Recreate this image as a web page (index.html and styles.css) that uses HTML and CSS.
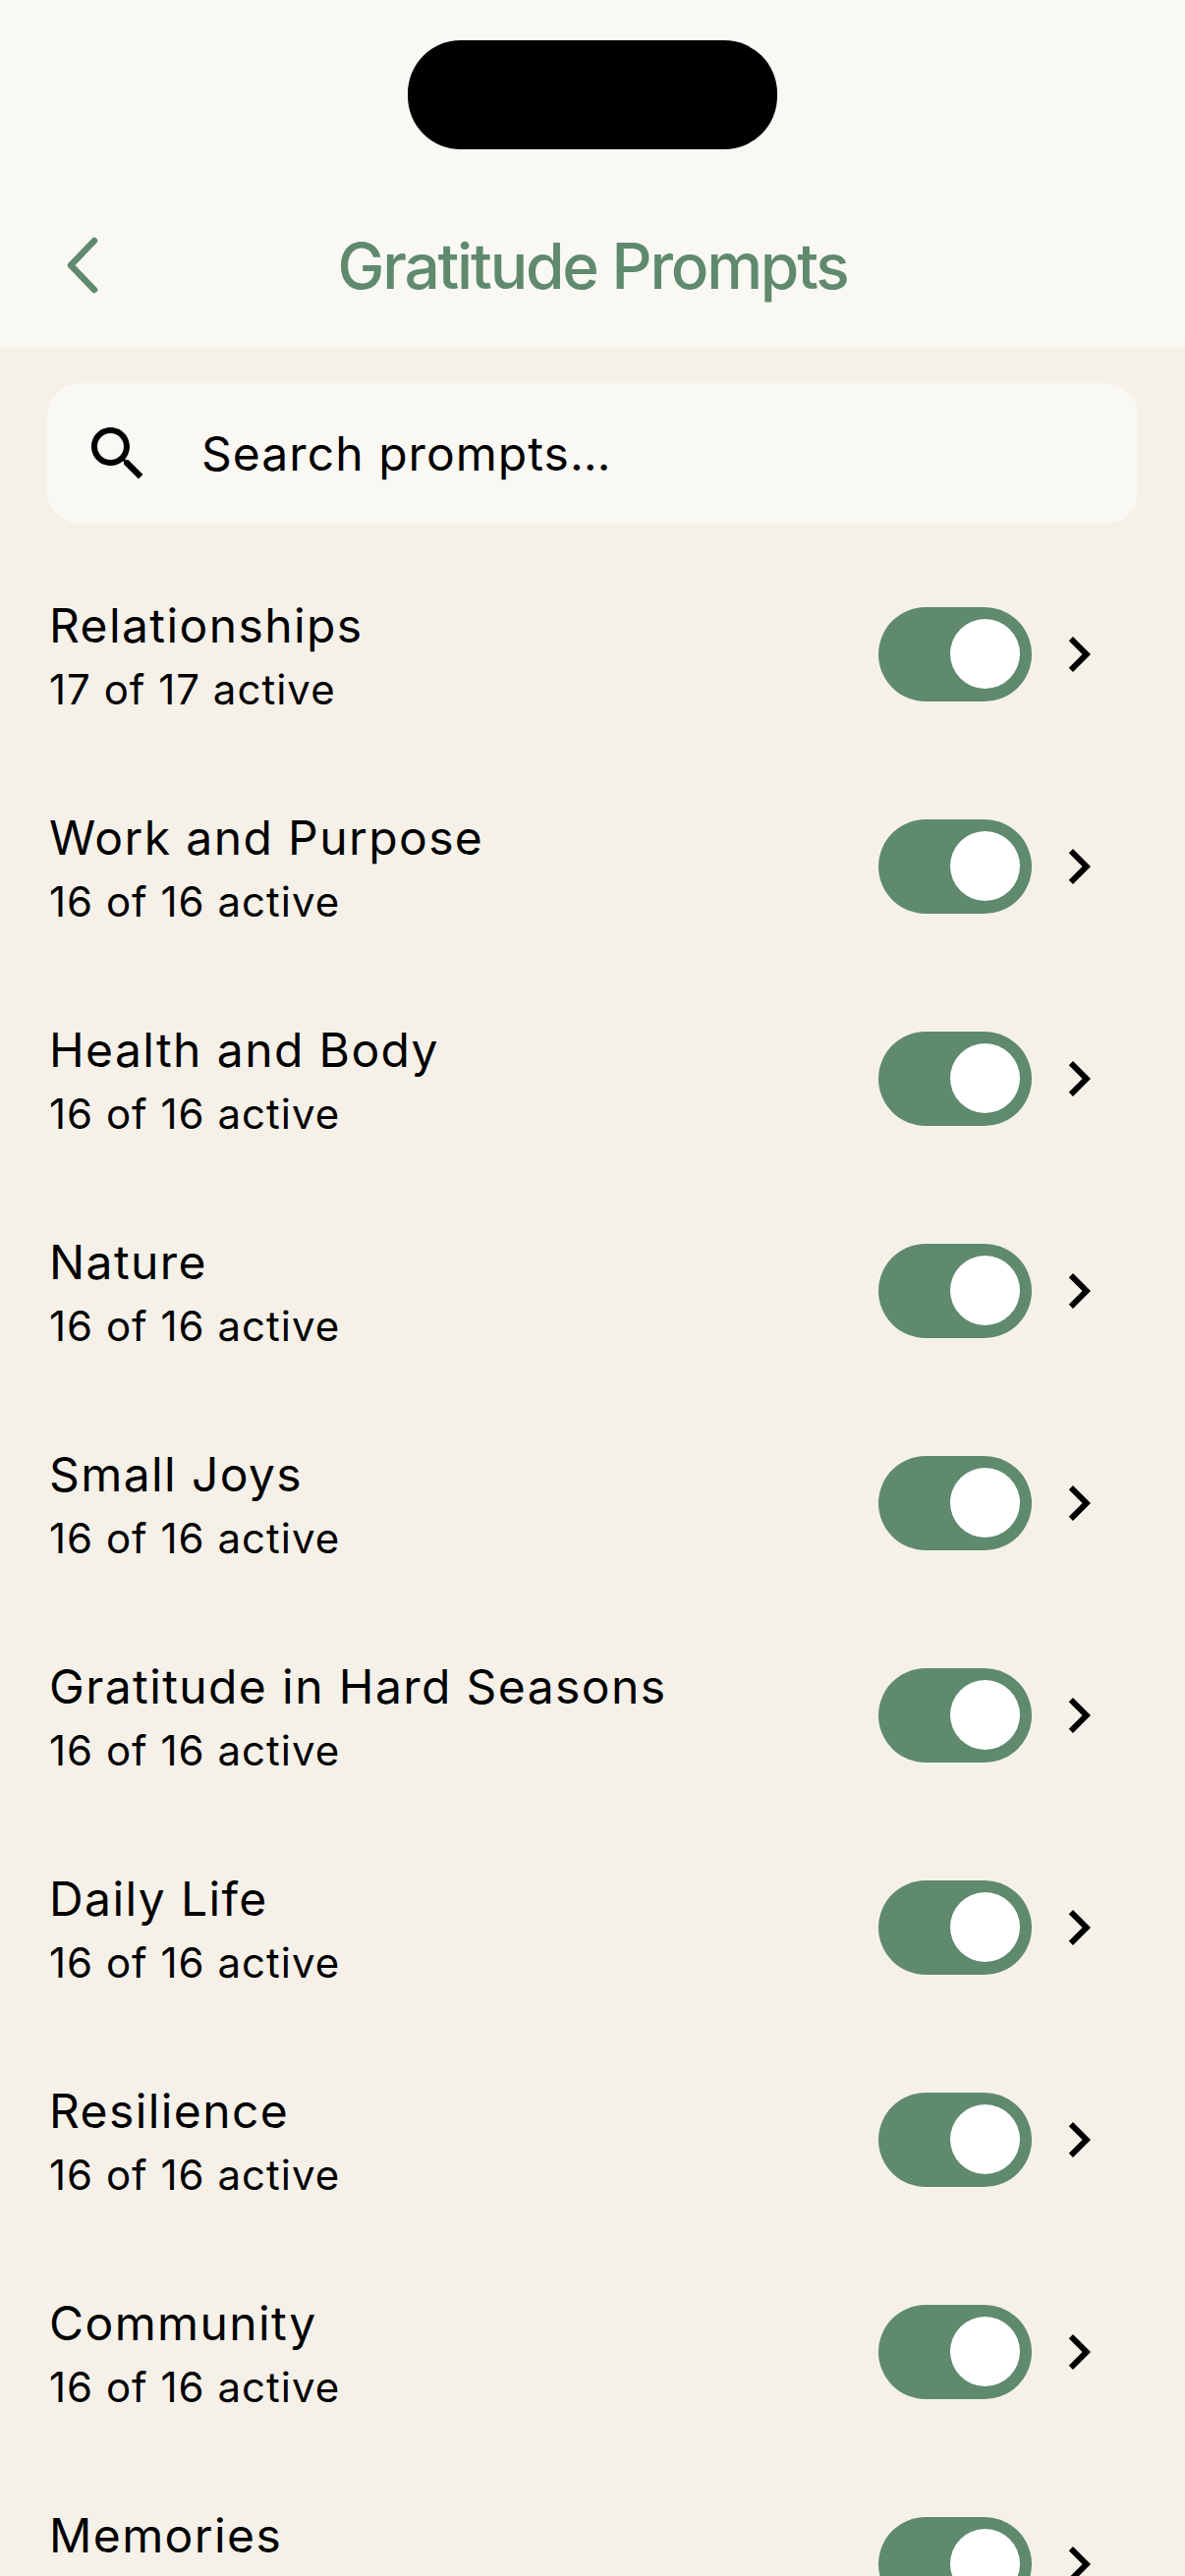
FILE: index.html
```html
<!DOCTYPE html>
<html lang="en">
<head>
<meta charset="utf-8">
<title>Gratitude Prompts</title>
<link rel="stylesheet" href="styles.css">
</head>
<body>
<header class="header">
  <svg class="back" viewBox="0 0 40 64" aria-hidden="true"><path d="M33 7 L9 32 L33 57"/></svg>
  <h1 class="title">Gratitude Prompts</h1>
</header>
<div class="island"></div>
<div class="search">
  <svg class="search-icon" viewBox="0 0 24 24" aria-hidden="true"><path d="M15.5 14h-.79l-.28-.27C15.41 12.59 16 11.11 16 9.5 16 5.91 13.09 3 9.5 3S3 5.91 3 9.5 5.91 16 9.5 16c1.61 0 3.09-.59 4.23-1.57l.27.28v.79l5 4.99L20.49 19l-4.99-5zm-6 0C7.01 14 5 11.99 5 9.5S7.01 5 9.5 5 14 7.01 14 9.5 11.99 14 9.5 14z"/></svg>
  <span class="search-text">Search prompts…</span>
</div>
<main class="list">
  <div class="row"><div class="info"><div class="name">Relationships</div><div class="count">17 of 17 active</div></div><div class="toggle"><div class="thumb"></div></div><svg class="chev" viewBox="0 0 24 24" aria-hidden="true"><path d="M10 6L8.59 7.41 13.17 12l-4.58 4.59L10 18l6-6z"/></svg></div>
  <div class="row"><div class="info"><div class="name">Work and Purpose</div><div class="count">16 of 16 active</div></div><div class="toggle"><div class="thumb"></div></div><svg class="chev" viewBox="0 0 24 24" aria-hidden="true"><path d="M10 6L8.59 7.41 13.17 12l-4.58 4.59L10 18l6-6z"/></svg></div>
  <div class="row"><div class="info"><div class="name">Health and Body</div><div class="count">16 of 16 active</div></div><div class="toggle"><div class="thumb"></div></div><svg class="chev" viewBox="0 0 24 24" aria-hidden="true"><path d="M10 6L8.59 7.41 13.17 12l-4.58 4.59L10 18l6-6z"/></svg></div>
  <div class="row"><div class="info"><div class="name">Nature</div><div class="count">16 of 16 active</div></div><div class="toggle"><div class="thumb"></div></div><svg class="chev" viewBox="0 0 24 24" aria-hidden="true"><path d="M10 6L8.59 7.41 13.17 12l-4.58 4.59L10 18l6-6z"/></svg></div>
  <div class="row"><div class="info"><div class="name">Small Joys</div><div class="count">16 of 16 active</div></div><div class="toggle"><div class="thumb"></div></div><svg class="chev" viewBox="0 0 24 24" aria-hidden="true"><path d="M10 6L8.59 7.41 13.17 12l-4.58 4.59L10 18l6-6z"/></svg></div>
  <div class="row"><div class="info"><div class="name">Gratitude in Hard Seasons</div><div class="count">16 of 16 active</div></div><div class="toggle"><div class="thumb"></div></div><svg class="chev" viewBox="0 0 24 24" aria-hidden="true"><path d="M10 6L8.59 7.41 13.17 12l-4.58 4.59L10 18l6-6z"/></svg></div>
  <div class="row"><div class="info"><div class="name">Daily Life</div><div class="count">16 of 16 active</div></div><div class="toggle"><div class="thumb"></div></div><svg class="chev" viewBox="0 0 24 24" aria-hidden="true"><path d="M10 6L8.59 7.41 13.17 12l-4.58 4.59L10 18l6-6z"/></svg></div>
  <div class="row"><div class="info"><div class="name">Resilience</div><div class="count">16 of 16 active</div></div><div class="toggle"><div class="thumb"></div></div><svg class="chev" viewBox="0 0 24 24" aria-hidden="true"><path d="M10 6L8.59 7.41 13.17 12l-4.58 4.59L10 18l6-6z"/></svg></div>
  <div class="row"><div class="info"><div class="name">Community</div><div class="count">16 of 16 active</div></div><div class="toggle"><div class="thumb"></div></div><svg class="chev" viewBox="0 0 24 24" aria-hidden="true"><path d="M10 6L8.59 7.41 13.17 12l-4.58 4.59L10 18l6-6z"/></svg></div>
  <div class="row"><div class="info"><div class="name">Memories</div><div class="count">16 of 16 active</div></div><div class="toggle"><div class="thumb"></div></div><svg class="chev" viewBox="0 0 24 24" aria-hidden="true"><path d="M10 6L8.59 7.41 13.17 12l-4.58 4.59L10 18l6-6z"/></svg></div>
</main>
</body>
</html>
```
FILE: styles.css
```css
* { box-sizing: border-box; }
html, body { margin: 0; padding: 0; }
body {
  position: relative;
  width: 1206px;
  height: 2622px;
  overflow: hidden;
  background: #f5f1e9;
  font-family: Inter, "Liberation Sans", sans-serif;
  font-weight: 400;
  color: #000;
}
.island {
  position: absolute;
  left: 415px;
  top: 41px;
  width: 376px;
  height: 111px;
  background: #000;
  border-radius: 54px;
}
.header {
  position: relative;
  height: 354px;
  background: #faf8f3;
  display: flex;
  justify-content: center;
  align-items: flex-end;
  padding-bottom: 47px;
}
.back {
  position: absolute;
  left: 63px;
  top: 238px;
  width: 40px;
  height: 64px;
  fill: none;
  stroke: #5f8a6e;
  stroke-width: 6.5;
  stroke-linecap: round;
  stroke-linejoin: round;
}
.title {
  margin: 0;
  font-size: 64px;
  line-height: 72px;
  font-weight: 500;
  letter-spacing: -2.2px;
  color: #5f8a6e;
}
.search {
  display: flex;
  align-items: center;
  gap: 49px;
  height: 143px;
  margin: 36px 48px 25px;
  padding-left: 36px;
  background: #faf8f3;
  border-radius: 33px;
}
.search-icon { width: 72px; height: 72px; fill: #000; flex: none; }
.search-text { font-size: 48px; letter-spacing: 1.05px; }
.list { display: flex; flex-direction: column; }
.row {
  display: flex;
  align-items: center;
  height: 216px;
  padding: 0 72px 0 50px;
  flex: none;
}
.info { flex: 1; min-width: 0; padding-top: 2px; }
.name { font-size: 48px; line-height: 60px; letter-spacing: 1.4px; }
.count { font-size: 42px; line-height: 52px; letter-spacing: 1px; margin-top: 9px; }
.toggle {
  width: 156px;
  height: 96px;
  padding: 12px;
  border-radius: 48px;
  background: #5f8a6e;
  display: flex;
  justify-content: flex-end;
  flex: none;
}
.thumb { width: 71px; height: 71px; border-radius: 50%; background: #fff; }
.chev { width: 72px; height: 72px; margin-left: 12px; fill: #000; flex: none; }
```
